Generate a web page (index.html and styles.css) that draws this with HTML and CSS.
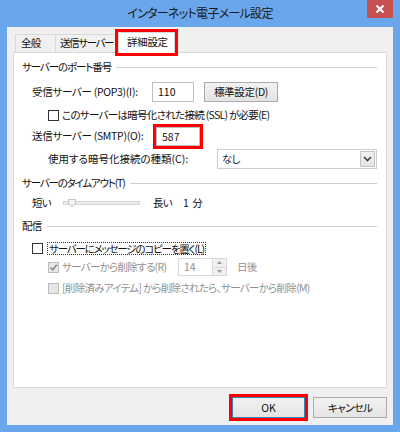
FILE: index.html
```html
<!DOCTYPE html>
<html lang="ja">
<head>
<meta charset="utf-8">
<title>インターネット電子メール設定</title>
<link rel="stylesheet" href="styles.css">
</head>
<body>
<div class="window">
  <div class="titlebar">
    <div class="title">インターネット電子メール設定</div>
    <div class="close"><svg width="10" height="10" viewBox="0 0 10 10"><path d="M1.5 1.5 L8.5 8.5 M8.5 1.5 L1.5 8.5" stroke="#fff" stroke-width="2"/></svg></div>
  </div>
  <div class="client">
    <div class="tabs">
      <div class="tab tab-general">全般</div>
      <div class="tab tab-send">送信サーバー</div>
      <div class="tab active hl">詳細設定</div>
    </div>
    <div class="panel">
      <div class="group g1">サーバーのポート番号</div>
      <div class="row ind r-pop">
        <span class="lbl">受信サーバー (POP3)(I):</span>
        <span class="input port">110</span>
        <span class="btn btn-std">標準設定(D)</span>
      </div>
      <div class="row ind2 r-ssl">
        <span class="cb"></span><span>このサーバーは暗号化された接続 (SSL) が必要(E)</span>
      </div>
      <div class="row ind r-smtp">
        <span class="lbl">送信サーバー (SMTP)(O):</span>
        <span class="input port smtp hl">587</span>
      </div>
      <div class="row ind2 r-enc">
        <span class="lbl-enc">使用する暗号化接続の種類(C):</span>
        <span class="select"><span>なし</span><span class="arrow"><svg width="9" height="6" viewBox="0 0 9 6"><path d="M1 1 L4.5 4.5 L8 1" fill="none" stroke="#444" stroke-width="1.6"/></svg></span></span>
      </div>
      <div class="group g2 tight">サーバーのタイムアウト(T)</div>
      <div class="row ind r-time">
        <span class="short">短い</span>
        <svg class="slider" width="77" height="14" viewBox="0 0 77 14">
          <rect x="0.5" y="5.5" width="76" height="3" fill="#ececec" stroke="#d6d6d6"/>
          <path d="M5.5 3.5 H12.5 V8 L9 10.5 L5.5 8 Z" fill="#f2f2f2" stroke="#c4c4c4"/>
        </svg>
        <span class="long">長い</span>
        <span class="minutes">1 分</span>
      </div>
      <div class="group g3">配信</div>
      <div class="row ind r-copy">
        <span class="cb"></span><span class="focus tight">サーバーにメッセージのコピーを置く(L)</span>
      </div>
      <div class="row ind2 r-del dis">
        <span class="cb cb-dis"><svg width="9" height="9" viewBox="0 0 9 9"><path d="M1.5 4.5 L3.7 6.7 L7.8 1.8" fill="none" stroke="#8a8a8a" stroke-width="1.6"/></svg></span>
        <span class="del-lbl">サーバーから削除する(R)</span>
        <span class="spin"><span class="spin-v">14</span><span class="spin-arrows"><span class="spin-b"><svg width="5" height="3" viewBox="0 0 5 3"><path d="M0 3 L2.5 0 L5 3 Z" fill="#9a9a9a"/></svg></span><span class="spin-b"><svg width="5" height="3" viewBox="0 0 5 3"><path d="M0 0 L2.5 3 L5 0 Z" fill="#9a9a9a"/></svg></span></span></span>
        <span class="days">日後</span>
      </div>
      <div class="row ind2 r-deleted dis">
        <span class="cb cb-dis"></span><span>[削除済みアイテム] から削除されたら、サーバーから削除(M)</span>
      </div>
    </div>
    <div class="buttons">
      <span class="btn ok hl">OK</span>
      <span class="btn cancel">キャンセル</span>
    </div>
  </div>
</div>
</body>
</html>
```

FILE: styles.css
```css
* { box-sizing: border-box; }
html, body { margin: 0; padding: 0; }
body {
  width: 400px;
  height: 432px;
  font-family: "Noto Sans CJK JP", "Noto Sans", sans-serif;
  font-size: 10.5px;
  color: #111;
  font-feature-settings: "palt" 1;
  letter-spacing: -0.7px;
  background: #fff;
}
.window {
  width: 400px;
  height: 432px;
  background: #69a6ec;
  padding: 0 7px 7px 7px;
  display: flex;
  flex-direction: column;
}
.titlebar {
  height: 27px;
  flex: none;
  display: grid;
  grid-template-columns: 1fr auto 1fr;
}
.title {
  grid-column: 2;
  align-self: center;
  font-size: 12px;
  line-height: 16px;
  color: #1a1a1a;
  white-space: nowrap;
  padding-bottom: 1px;
}
.close {
  grid-column: 3;
  justify-self: end;
  align-self: start;
  width: 26px;
  height: 18px;
  background: #c75050;
  display: flex;
  align-items: center;
  justify-content: center;
}
.client {
  flex: 1;
  background: #f0f0f0;
  padding: 5px 6px 7px 6px;
  display: flex;
  flex-direction: column;
}
.tabs {
  display: flex;
  align-items: flex-end;
  padding-left: 2px;
  height: 20px;
  flex: none;
}
.tab {
  height: 18px;
  border: 1px solid #d9d9d9;
  border-bottom: none;
  background: #f0f0f0;
  padding-left: 5px;
  line-height: 16px;
  margin-right: -1px;
  white-space: nowrap;
  overflow: hidden;
}
.tab-general { width: 41px; }
.tab-send { width: 64px; padding-left: 4px; letter-spacing: -1.4px; }
.tab.active {
  width: 57px;
  height: 21px;
  background: #fff;
  padding-left: 8px;
  padding-top: 1px;
  margin-bottom: -1px;
  position: relative;
  z-index: 1;
  letter-spacing: -0.3px;
  overflow: visible;
}
.hl { outline: 3px solid #ff0000; }
.panel {
  flex: 1;
  background: #fff;
  border: 1px solid #d9d9d9;
  padding: 0 9px 0 8px;
  display: flex;
  flex-direction: column;
}
.group {
  display: flex;
  align-items: center;
  height: 14px;
  line-height: 14px;
  white-space: nowrap;
}
.group::after {
  content: "";
  flex: 1;
  height: 1px;
  background: #cfcfcf;
  margin-left: 5px;
}
.tight { letter-spacing: -1.2px; }
.row {
  display: flex;
  align-items: center;
  white-space: nowrap;
  line-height: 14px;
}
.ind { margin-left: 10px; }
.ind2 { margin-left: 26px; }
.g1 { margin-top: 7px; letter-spacing: -1.1px; }
.r-pop { margin-top: 8px; height: 20px; }
.r-ssl { margin-top: 6px; height: 14px; }
.r-smtp { margin-top: 4px; height: 20px; }
.r-enc { margin-top: 3px; height: 20px; }
.g2 { margin-top: 7px; }
.r-time { margin-top: 6px; height: 14px; }
.g3 { margin-top: 9px; }
.r-copy { margin-top: 8px; height: 14px; }
.r-del { margin-top: 3px; height: 18px; }
.r-deleted { margin-top: 5px; height: 14px; }
.lbl { width: 120px; flex: none; letter-spacing: -0.3px; }
.lbl-enc { width: 169px; flex: none; letter-spacing: 0; }
.input {
  height: 20px;
  border: 1px solid #bfbfbf;
  background: #fff;
  padding-left: 5px;
  line-height: 18px;
  letter-spacing: 0;
}
.port { width: 42px; }
.smtp { width: 44px; margin-left: 4px; height: 19px; line-height: 17px; }
.btn {
  height: 20px;
  border: 1px solid #acacac;
  background: linear-gradient(#f2f2f2, #e4e4e4);
  display: flex;
  align-items: center;
  justify-content: center;
  white-space: nowrap;
  color: #111;
}
.btn-std { width: 74px; margin-left: 10px; letter-spacing: -0.3px; }
.cb {
  width: 11px;
  height: 11px;
  border: 1px solid #333;
  background: #fff;
  margin-right: 3px;
  flex: none;
  display: flex;
  align-items: center;
  justify-content: center;
}
.cb-dis { border-color: #bcbcbc; background: #e6e6e6; }
.dis { color: #8f8f8f; }
.select {
  width: 160px;
  height: 20px;
  border: 1px solid #cfcfcf;
  background: #fff;
  display: flex;
  align-items: center;
  justify-content: space-between;
  padding: 0 1px 0 4px;
  color: #1a2a40;
}
.arrow {
  width: 15px;
  height: 16px;
  background: linear-gradient(#f2f2f2, #e3e3e3);
  border: 1px solid #c4c4c4;
  display: flex;
  align-items: center;
  justify-content: center;
}
.short { width: 31px; flex: none; }
.slider { flex: none; }
.long { width: 30px; margin-left: 13px; flex: none; }
.minutes { letter-spacing: 0; word-spacing: 1px; }
.focus {
  border: 1px dotted #333;
  padding: 0 1px;
  margin-left: 1px;
  line-height: 11px;
}
.del-lbl { width: 116px; flex: none; }
.spin {
  width: 49px;
  height: 18px;
  border: 1px solid #d9d9d9;
  background: #fff;
  display: flex;
  flex: none;
}
.spin-v { flex: 1; padding-left: 5px; line-height: 16px; color: #8f8f8f; letter-spacing: 0; }
.spin-arrows {
  width: 14px;
  display: flex;
  flex-direction: column;
  border-left: 1px solid #d9d9d9;
}
.spin-b {
  flex: 1;
  background: #f0f0f0;
  display: flex;
  align-items: center;
  justify-content: center;
}
.spin-b + .spin-b { border-top: 1px solid #d9d9d9; }
.days { margin-left: 10px; }
.buttons {
  display: flex;
  justify-content: flex-end;
  gap: 8px;
  margin-top: 9px;
  flex: none;
}
.buttons .btn { height: 21px; }
.ok { width: 73px; border-color: #3c7fb1; letter-spacing: 0; }
.cancel { width: 74px; }
```
